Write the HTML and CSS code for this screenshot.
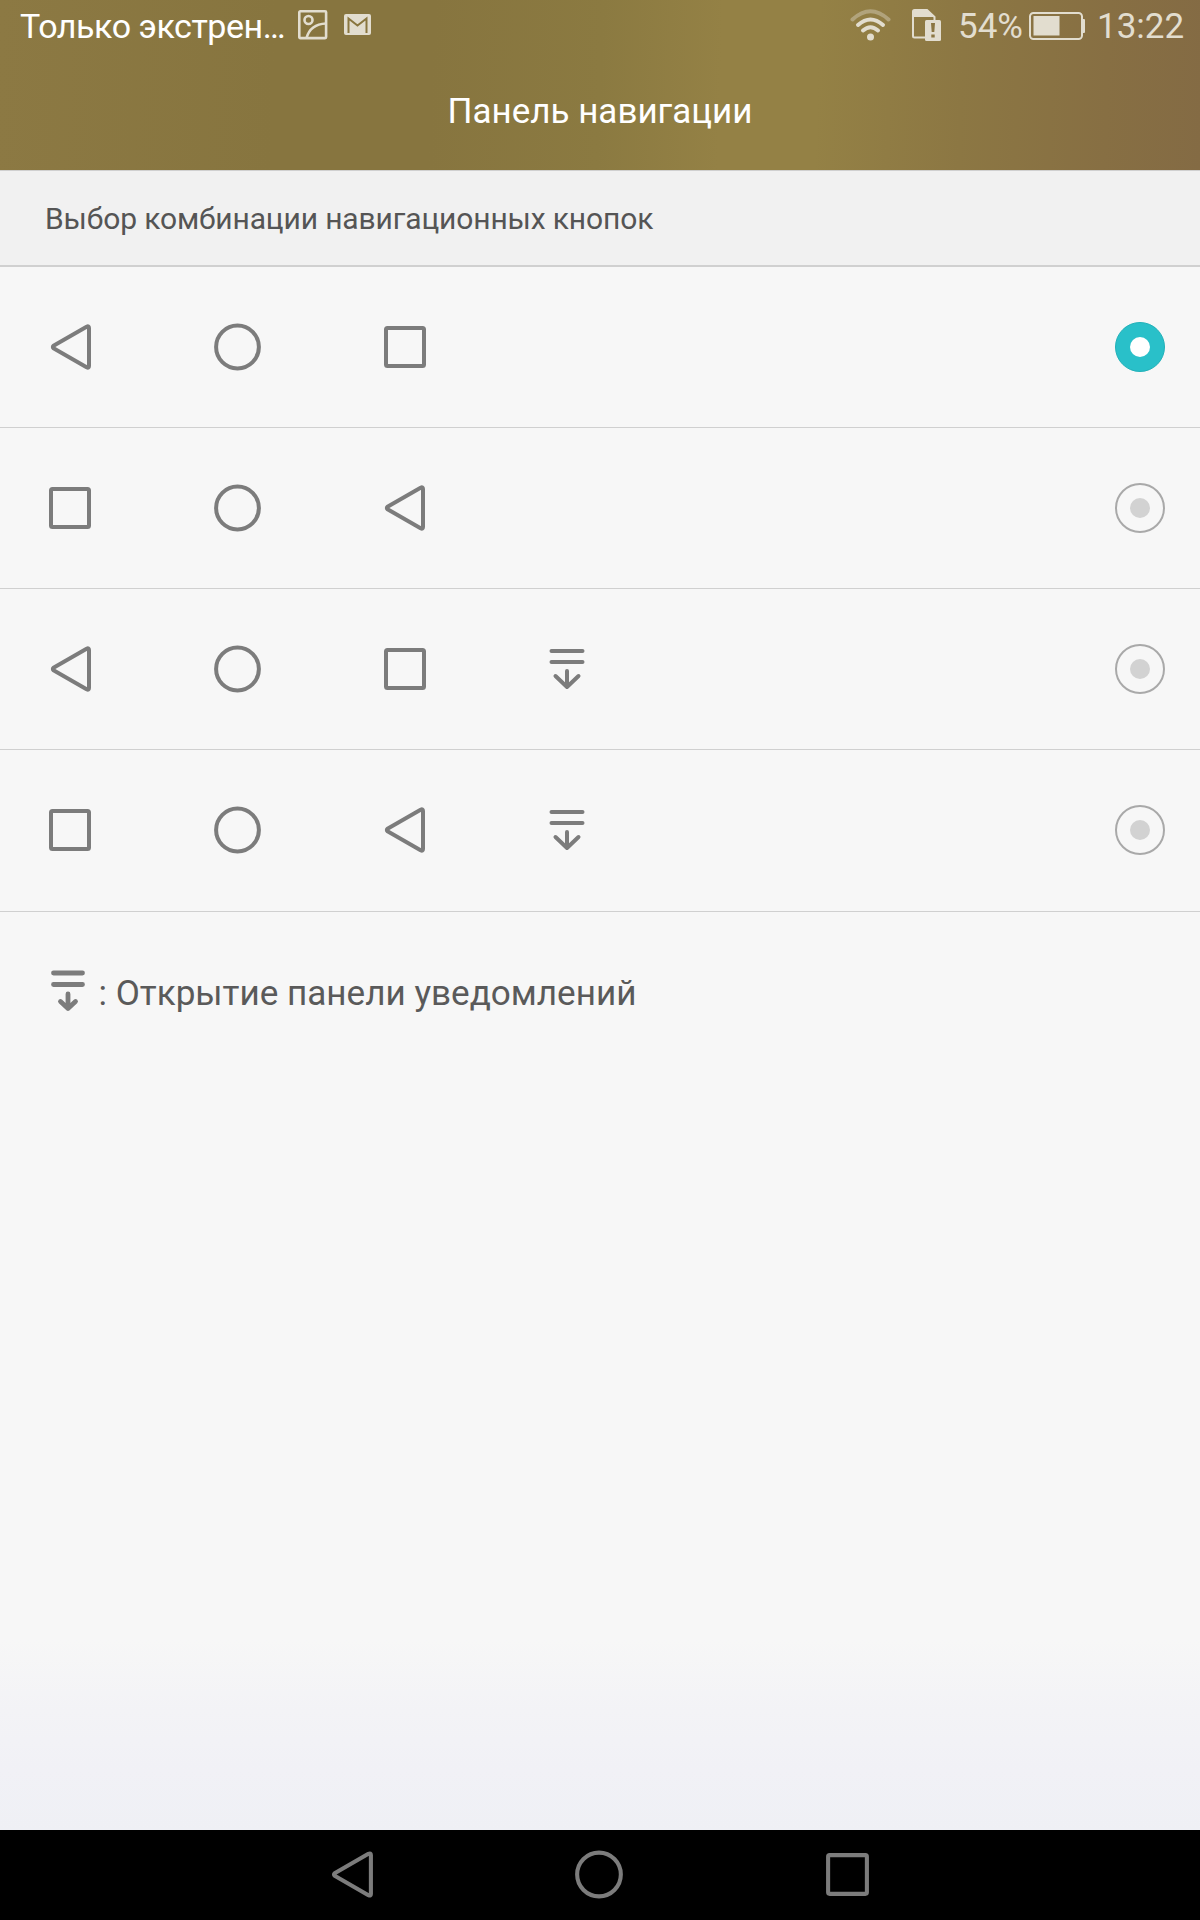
FILE: index.html
```
<!DOCTYPE html>
<html lang="ru">
<head>
    <meta charset="UTF-8">
    <title>Панель навигации</title>
    <link rel="stylesheet" href="styles.css">
</head>
<body>
    <!-- Общие иконки -->
    <svg class="sprite">
        <symbol id="back" viewBox="0 0 48 48">
            <path d="M7.500 22.800L40.600 3.700Q43 2.600 43 5V43Q43 45.400 40.600 44.300L7.500 25.200Q6.200 24 7.500 22.800Z"/>
        </symbol>
        <symbol id="home" viewBox="0 0 48 48">
            <circle cx="23.500" cy="24" r="21.400"/>
        </symbol>
        <symbol id="recent" viewBox="0 0 48 48">
            <rect x="5" y="5" width="38" height="38" rx="1.500"/>
        </symbol>
        <symbol id="panel" viewBox="0 0 48 48">
            <path d="M2.500 6H33.500M2.500 17H33.500M18 26V42M6.500 31L18 42L29.500 31"/>
        </symbol>
    </svg>

    <header class="header">
        <div class="status">
            <span class="operator">Только экстрен…</span>
            <svg class="icon-picture" viewBox="0 0 30 30" width="30" height="30">
                <g fill="none" stroke="#e2ddcf" stroke-width="2.600">
                    <rect x="1.300" y="1.300" width="26.800" height="26.800" rx="1"/>
                    <circle cx="10.500" cy="10" r="4"/>
                    <path d="M8.500 28C11 19 17 14 28 13.500"/>
                </g>
            </svg>
            <svg class="icon-mail" viewBox="0 0 27 21" width="27" height="21">
                <rect width="27" height="21" rx="2" fill="#e2ddcf"/>
                <path d="M4.500 19V4.500L13.500 11.500L22.500 4.500V19" fill="none" stroke="#89763f" stroke-width="2"/>
            </svg>
            <svg class="icon-wifi" viewBox="0 0 42 32" width="42" height="32">
                <g fill="none" stroke="#e2ddcf" stroke-width="4" stroke-linecap="round">
                    <path d="M2.500 10.500Q20.500 -6 38.500 10.500" opacity=".4"/>
                    <path d="M8 16Q20.500 5 33 16"/>
                    <path d="M13 21.500Q20.500 15 28 21.500"/>
                </g>
                <circle cx="20.500" cy="28" r="3.500" fill="#e2ddcf"/>
            </svg>
            <svg class="icon-sim" viewBox="0 0 30 32" width="30" height="32">
                <path d="M1 7V2.500Q1 1 2.500 1H15L22.500 8V13M1 6V27Q1 28.500 2.500 28.500H13" fill="none" stroke="#e2ddcf" stroke-width="2"/>
                <path d="M1 1H15L22.500 8H1Z" fill="#e2ddcf"/>
                <rect x="13" y="11" width="16" height="21" rx="1.500" fill="#e2ddcf"/>
                <path d="M19 14H23L22.300 23H19.700Z M19.300 25.500H22.700V28.500H19.300Z" fill="#8b7642"/>
            </svg>
            <span class="percent">54%</span>
            <svg class="icon-battery" viewBox="0 0 57 28" width="57" height="28">
                <rect x="1" y="1" width="52" height="26" rx="3.500" fill="none" stroke="#e2ddcf" stroke-width="2"/>
                <rect x="4.500" y="4" width="26" height="19.500" fill="#e2ddcf"/>
                <rect x="53" y="7" width="3" height="14" rx="1" fill="#e2ddcf"/>
            </svg>
            <span class="clock">13:22</span>
        </div>
        <h1 class="title">Панель навигации</h1>
    </header>

    <main class="content">
        <h2 class="section">Выбор комбинации навигационных кнопок</h2>

        <!-- Варианты расположения кнопок -->
        <div class="option">
            <svg class="key"><use href="#back"/></svg>
            <svg class="key"><use href="#home"/></svg>
            <svg class="key"><use href="#recent"/></svg>
            <span class="radio checked"></span>
        </div>
        <div class="option">
            <svg class="key"><use href="#recent"/></svg>
            <svg class="key"><use href="#home"/></svg>
            <svg class="key"><use href="#back" x="-1"/></svg>
            <span class="radio"></span>
        </div>
        <div class="option">
            <svg class="key"><use href="#back"/></svg>
            <svg class="key"><use href="#home"/></svg>
            <svg class="key"><use href="#recent"/></svg>
            <svg class="key"><use href="#panel"/></svg>
            <span class="radio"></span>
        </div>
        <div class="option last">
            <svg class="key"><use href="#recent"/></svg>
            <svg class="key"><use href="#home"/></svg>
            <svg class="key"><use href="#back" x="-1"/></svg>
            <svg class="key"><use href="#panel"/></svg>
            <span class="radio"></span>
        </div>

        <div class="hint">
            <svg class="hint-icon" viewBox="0 0 34 42" width="34" height="42">
                <path d="M2.500 3H31.500M2.500 14.500H31.500M17 24V38.500M9.500 31.500L17 38.500L24.500 31.500"/>
            </svg>
            <span class="hint-text">: Открытие панели уведомлений</span>
        </div>
    </main>

    <nav class="navbar">
        <svg class="nav-key" viewBox="0 0 48 48"><use href="#back" width="48" height="48"/></svg>
        <svg class="nav-key" viewBox="0 0 48 48"><use href="#home" width="48" height="48"/></svg>
        <svg class="nav-key" viewBox="0 0 48 48"><use href="#recent" width="48" height="48"/></svg>
    </nav>
</body>
</html>
```
FILE: styles.css
```
* {
    box-sizing: border-box;
}

body {
    font-family: Roboto, sans-serif;
    margin: 0;
    height: 1920px;
    display: flex;
    flex-direction: column;
    background-color: #f7f7f7;
}

.sprite {
    display: none;
}

.header {
    height: 170px;
    color: #fff;
    background: linear-gradient(92deg, #8c7943 0%, #87753f 23%, #87753f 36%, #8b7a41 50%, #948145 60%, #948145 68%, #8c7743 80%, #876f43 92%, #846b44 100%);
}

.status {
    display: flex;
    align-items: flex-start;
    height: 54px;
    padding-left: 20px;
    font-size: 34px;
    line-height: 52px;
    white-space: nowrap;
}

.operator {
    width: 278px;
    letter-spacing: -0.45px;
}

.icon-picture {
    margin-top: 10px;
}

.icon-mail {
    margin: 14px 0 0 16px;
}

.icon-wifi {
    margin: 9px 0 0 auto;
}

.icon-sim {
    margin: 9px 0 0 20px;
}

.percent,
.clock {
    color: #e2ddcf;
    font-size: 35px;
    line-height: 54px;
}

.percent {
    width: 71px;
    margin-left: 16px;
}

.icon-battery {
    margin-top: 12px;
}

.clock {
    width: 103px;
    margin-left: 11px;
}

.title {
    margin: 0;
    font-size: 35px;
    font-weight: 400;
    line-height: 116px;
    text-align: center;
}

.content {
    flex: 1;
    background: linear-gradient(#f7f7f7 0, #f7f7f7 1470px, #f3f3f6 1540px, #f1f1f6 1600px, #eff0f5 100%);
}

.section {
    height: 97px;
    margin: 0;
    padding-left: 45px;
    border-top: 1px solid #d0d0d0;
    border-bottom: 2px solid #d0d0d0;
    background-color: #f1f1f1;
    color: #555;
    font-size: 30px;
    font-weight: 400;
    line-height: 96px;
    letter-spacing: -0.13px;
}

.option {
    display: flex;
    align-items: center;
    gap: 119.5px;
    height: 161px;
    padding: 0 35px 0 46px;
    border-bottom: 1px solid #d0d0d0;
}

.last {
    height: 162px;
    padding-bottom: 1px;
}

.key {
    width: 48px;
    height: 48px;
    overflow: visible;
}

.key use {
    width: 48px;
    height: 48px;
}

.key,
.nav-key {
    fill: none;
    stroke: #7c7c7c;
    stroke-width: 4;
    stroke-linecap: round;
    stroke-linejoin: round;
}

.radio {
    display: grid;
    place-items: center;
    width: 50px;
    height: 50px;
    margin-left: auto;
    border: 2px solid #a9a9a9;
    border-radius: 50%;
}

.radio::after {
    content: "";
    width: 20px;
    height: 20px;
    border-radius: 50%;
    background-color: #d2d2d2;
}

.checked {
    border: 1px solid #22b1b9;
    background-color: #29c0c9;
}

.checked::after {
    background-color: #fff;
}

.hint {
    display: flex;
    align-items: center;
    gap: 14px;
    height: 161px;
    padding-left: 50.5px;
    color: #5a5a5a;
    font-size: 35.1px;
}

.hint-icon {
    margin-bottom: 3px;
    fill: none;
    stroke: #7c7c7c;
    stroke-width: 4.8;
    stroke-linecap: round;
    stroke-linejoin: round;
}

.navbar {
    display: flex;
    justify-content: center;
    align-items: center;
    gap: 199px;
    height: 90px;
    padding: 0 2px 1px 0;
    background-color: #000;
}

.nav-key {
    width: 49px;
    height: 49px;
}
```
